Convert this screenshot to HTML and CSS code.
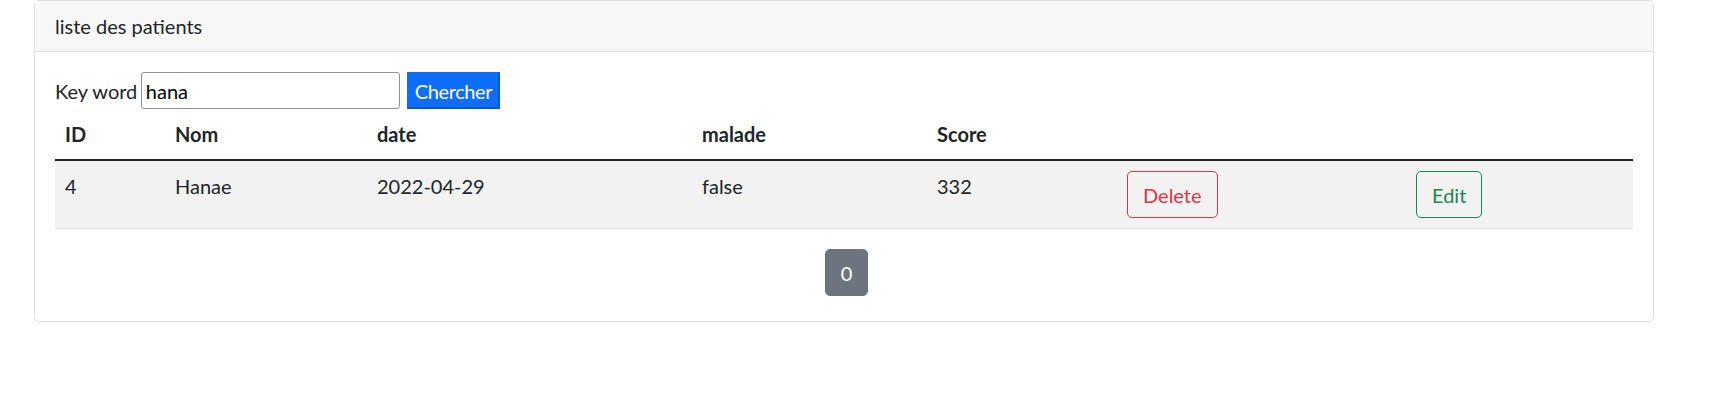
FILE: index.html
```html
<!DOCTYPE html>
<html lang="fr">
<head>
<meta charset="utf-8">
<title>Patients</title>
<link rel="stylesheet" href="styles.css">
</head>
<body>
<div class="card">
  <div class="card-header">liste des patients</div>
  <div class="card-body">
    <form class="search">
      <label for="kw">Key word</label>
      <input id="kw" type="text" value="hana">
      <button type="button" class="btn-search">Chercher</button>
    </form>
    <table class="table">
      <colgroup>
        <col class="c-id"><col class="c-nom"><col class="c-date"><col class="c-malade"><col class="c-score"><col class="c-del"><col class="c-edit">
      </colgroup>
      <thead>
        <tr><th>ID</th><th>Nom</th><th>date</th><th>malade</th><th>Score</th><th></th><th></th></tr>
      </thead>
      <tbody>
        <tr><td>4</td><td>Hanae</td><td>2022-04-29</td><td>false</td><td>332</td><td><a class="btn btn-danger" href="#">Delete</a></td><td><a class="btn btn-success" href="#">Edit</a></td></tr>
      </tbody>
    </table>
    <div class="pages"><a class="page" href="#">0</a></div>
  </div>
</div>
</body>
</html>
```

FILE: styles.css
```css
* { box-sizing: border-box; }
body {
  margin: 0;
  font-family: "Segoe UI", Lato, sans-serif;
  font-size: 20px;
  line-height: 30px;
  color: #212529;
  background: #fff;
}
.card {
  margin: 0 61px 0 34px;
  border: 1px solid #dfdfdf;
  border-radius: 5px;
}
.card-header {
  padding: 10px 20px;
  background: #f7f7f7;
  border-bottom: 1px solid #dfdfdf;
  border-radius: 4px 4px 0 0;
}
.card-body { padding: 20px 20px 25px; }
.search { display: flex; align-items: baseline; margin: 0; }
.search label { margin-right: 4px; }
.search input {
  width: 259px;
  height: 37px;
  font: inherit;
  color: #000;
  padding: 2.5px 3.5px;
  border: 1px solid #8f8f9d;
  border-radius: 3px;
  margin: 0 7px 0 0;
}
.btn-search {
  font: inherit;
  letter-spacing: -0.4px;
  height: 37px;
  padding: 1.5px 5.5px;
  color: #fff;
  background: #0d6efd;
  border: 2px solid;
  border-color: #0d6efd #0a58ca #0a58ca #0d6efd;
}
.table { width: 100%; border-collapse: collapse; table-layout: fixed; margin-bottom: 20px; }
.c-id { width: 110px; }
.c-nom { width: 202px; }
.c-date { width: 325px; }
.c-malade { width: 235px; }
.c-score { width: 190px; }
.c-del { width: 289px; }
.c-edit { width: 227px; }
.table th, .table td { padding: 10px; text-align: left; vertical-align: top; }
.table th { font-weight: 700; border-bottom: 2px solid #212529; }
.table td { background: #f2f2f2; border-bottom: 1px solid #dee2e6; }
.btn {
  display: inline-block;
  padding: 7.5px 15px;
  border: 1px solid;
  border-radius: 5px;
  text-decoration: none;
}
.btn-danger { color: #dc3545; border-color: #dc3545; }
.btn-success { color: #198754; border-color: #198754; }
.pages { display: flex; justify-content: center; padding-left: 5px; }
.page {
  display: inline-block;
  padding: 7.5px 15px;
  border: 1px solid #6c757d;
  background: #6c757d;
  color: #fff;
  border-radius: 5px;
  text-decoration: none;
}
```
